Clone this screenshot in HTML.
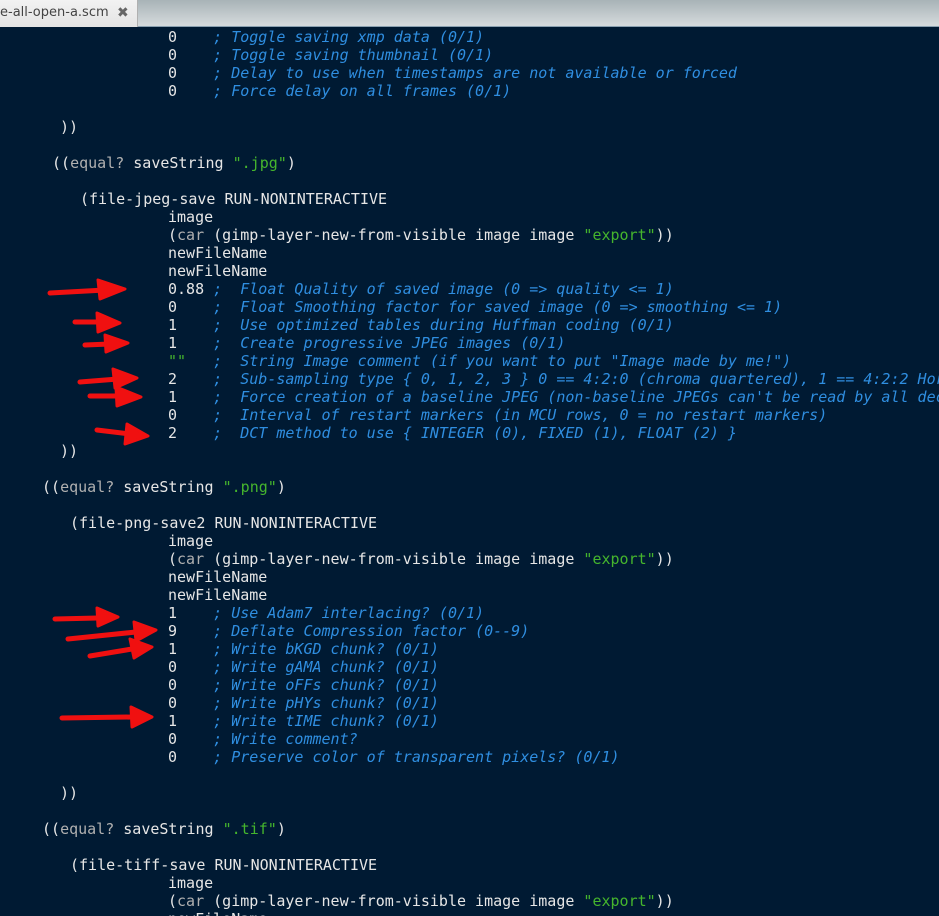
<!DOCTYPE html>
<html><head><meta charset="utf-8"><style>
html,body{margin:0;padding:0;overflow:hidden;width:939px;height:916px}
body{background:#001a33;position:relative;font-family:"DejaVu Sans Mono","Liberation Mono",monospace;font-size:15px;color:#e6e6e6}
.bar{position:absolute;left:0;top:0;width:939px;height:26px;background:linear-gradient(#a8b3b7,#d6dbdd);border-bottom:1px solid #8aa0b0}
.tab{position:absolute;left:0;top:0;width:137px;height:27px;background:linear-gradient(#f2f2f2,#e4e4e4);border-right:1px solid #b0b0b0;font-family:"DejaVu Sans","Liberation Sans",sans-serif;font-size:13px;color:#444;line-height:26px;white-space:nowrap;overflow:hidden}
.tab span{position:absolute;left:0;top:0}
.tab b{position:absolute;left:117px;top:0;color:#666;font-size:14px}
.l{position:absolute;white-space:pre;line-height:18px;height:18px;overflow:hidden}
.w{right:0}
.c{color:#2f8ee0;font-style:italic}
.g{color:#45b52d}
.k{color:#b0b0b0}
svg{position:absolute;left:0;top:0}
</style></head><body>
<div class="bar"></div>
<div class="tab"><span>e-all-open-a.scm</span><b>✖</b></div>
<div class="l" style="left:168px;top:28px">0    <span class="c">; Toggle saving xmp data (0/1)</span></div>
<div class="l" style="left:168px;top:46px">0    <span class="c">; Toggle saving thumbnail (0/1)</span></div>
<div class="l" style="left:168px;top:64px">0    <span class="c">; Delay to use when timestamps are not available or forced</span></div>
<div class="l" style="left:168px;top:82px">0    <span class="c">; Force delay on all frames (0/1)</span></div>
<div class="l" style="left:60px;top:118px">))</div>
<div class="l" style="left:52px;top:154px">((<span class="k">equal?</span> saveString <span class="g">".jpg"</span>)</div>
<div class="l" style="left:80px;top:190px">(file-jpeg-save RUN-NONINTERACTIVE</div>
<div class="l" style="left:168px;top:208px">image</div>
<div class="l" style="left:168px;top:226px">(<span class="k">car</span> (gimp-layer-new-from-visible image image <span class="g">"export"</span>))</div>
<div class="l" style="left:168px;top:244px">newFileName</div>
<div class="l" style="left:168px;top:262px">newFileName</div>
<div class="l" style="left:168px;top:280px">0.88 <span class="c">;  Float Quality of saved image (0 =&gt; quality &lt;= 1)</span></div>
<div class="l" style="left:168px;top:298px">0    <span class="c">;  Float Smoothing factor for saved image (0 =&gt; smoothing &lt;= 1)</span></div>
<div class="l" style="left:168px;top:316px">1    <span class="c">;  Use optimized tables during Huffman coding (0/1)</span></div>
<div class="l" style="left:168px;top:334px">1    <span class="c">;  Create progressive JPEG images (0/1)</span></div>
<div class="l" style="left:168px;top:352px"><span class="g">""</span>   <span class="c">;  String Image comment (if you want to put "Image made by me!")</span></div>
<div class="l w" style="left:168px;top:370px">2    <span class="c">;  Sub-sampling type { 0, 1, 2, 3 } 0 == 4:2:0 (chroma quartered), 1 == 4:2:2 Horizontal</span></div>
<div class="l w" style="left:168px;top:388px">1    <span class="c">;  Force creation of a baseline JPEG (non-baseline JPEGs can't be read by all decoders)</span></div>
<div class="l" style="left:168px;top:406px">0    <span class="c">;  Interval of restart markers (in MCU rows, 0 = no restart markers)</span></div>
<div class="l" style="left:168px;top:424px">2    <span class="c">;  DCT method to use { INTEGER (0), FIXED (1), FLOAT (2) }</span></div>
<div class="l" style="left:60px;top:442px">))</div>
<div class="l" style="left:42px;top:478px">((<span class="k">equal?</span> saveString <span class="g">".png"</span>)</div>
<div class="l" style="left:70px;top:514px">(file-png-save2 RUN-NONINTERACTIVE</div>
<div class="l" style="left:168px;top:532px">image</div>
<div class="l" style="left:168px;top:550px">(<span class="k">car</span> (gimp-layer-new-from-visible image image <span class="g">"export"</span>))</div>
<div class="l" style="left:168px;top:568px">newFileName</div>
<div class="l" style="left:168px;top:586px">newFileName</div>
<div class="l" style="left:168px;top:604px">1    <span class="c">; Use Adam7 interlacing? (0/1)</span></div>
<div class="l" style="left:168px;top:622px">9    <span class="c">; Deflate Compression factor (0--9)</span></div>
<div class="l" style="left:168px;top:640px">1    <span class="c">; Write bKGD chunk? (0/1)</span></div>
<div class="l" style="left:168px;top:658px">0    <span class="c">; Write gAMA chunk? (0/1)</span></div>
<div class="l" style="left:168px;top:676px">0    <span class="c">; Write oFFs chunk? (0/1)</span></div>
<div class="l" style="left:168px;top:694px">0    <span class="c">; Write pHYs chunk? (0/1)</span></div>
<div class="l" style="left:168px;top:712px">1    <span class="c">; Write tIME chunk? (0/1)</span></div>
<div class="l" style="left:168px;top:730px">0    <span class="c">; Write comment?</span></div>
<div class="l" style="left:168px;top:748px">0    <span class="c">; Preserve color of transparent pixels? (0/1)</span></div>
<div class="l" style="left:60px;top:784px">))</div>
<div class="l" style="left:42px;top:820px">((<span class="k">equal?</span> saveString <span class="g">".tif"</span>)</div>
<div class="l" style="left:70px;top:856px">(file-tiff-save RUN-NONINTERACTIVE</div>
<div class="l" style="left:168px;top:874px">image</div>
<div class="l" style="left:168px;top:892px">(<span class="k">car</span> (gimp-layer-new-from-visible image image <span class="g">"export"</span>))</div>
<div class="l" style="left:168px;top:910px;height:6px">newFileName</div>
<svg width="939" height="916" viewBox="0 0 939 916">
<g stroke="#f01010" stroke-width="5" stroke-linecap="round" fill="#f01010">
<line x1="50" y1="293" x2="105" y2="290"/><polygon points="98,280 125,289 100,299" stroke-width="3" stroke-linejoin="round"/>
<line x1="75" y1="322" x2="102" y2="322"/><polygon points="97,313 120,323 98,332" stroke-width="3" stroke-linejoin="round"/>
<line x1="85" y1="345" x2="110" y2="344"/><polygon points="105,335 128,343 106,352" stroke-width="3" stroke-linejoin="round"/>
<line x1="80" y1="382" x2="118" y2="379"/><polygon points="113,369 137,378 115,388" stroke-width="3" stroke-linejoin="round"/>
<line x1="90" y1="396" x2="122" y2="396"/><polygon points="116,387 141,397 117,406" stroke-width="3" stroke-linejoin="round"/>
<line x1="97" y1="430" x2="130" y2="434"/><polygon points="127,424 148,436 125,444" stroke-width="3" stroke-linejoin="round"/>
<line x1="55" y1="619" x2="98" y2="618"/><polygon points="97,608 118,617 98,626" stroke-width="3" stroke-linejoin="round"/>
<line x1="68" y1="639" x2="136" y2="632"/><polygon points="134,622 156,630 136,641" stroke-width="3" stroke-linejoin="round"/>
<line x1="90" y1="656" x2="132" y2="649"/><polygon points="130,639 152,647 134,658" stroke-width="3" stroke-linejoin="round"/>
<line x1="62" y1="718" x2="132" y2="717"/><polygon points="131,707 152,717 132,727" stroke-width="3" stroke-linejoin="round"/>
</g>
</svg>
</body></html>
